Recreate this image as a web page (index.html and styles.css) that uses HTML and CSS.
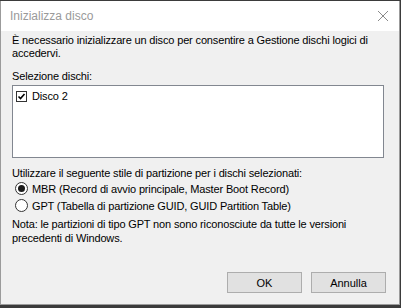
FILE: index.html
```html
<!DOCTYPE html>
<html>
<head>
    <title>Inizializza disco</title>
    <link rel="stylesheet" href="styles.css">
</head>
<body>
    <div class="window">
        <div class="titlebar">
            <span class="title">Inizializza disco</span>
            <svg class="close" width="12" height="12" viewBox="0 0 12 12">
                <path d="M1 1 L11 11 M11 1 L1 11" stroke="#8a8a8a" stroke-width="1" fill="none"/>
            </svg>
        </div>

        <div class="content">
            <p class="intro">È necessario inizializzare un disco per consentire a Gestione dischi logici di accedervi.</p>

            <div class="label">Selezione dischi:</div>
            <div class="listbox">
                <div class="list-item">
                    <svg class="check" width="11" height="11" viewBox="0 0 11 11">
                        <rect x="0.5" y="0.5" width="10" height="10" fill="#fff" stroke="#333"/>
                        <path d="M2.5 5.5 L4.5 7.5 L8.5 3" stroke="#000" stroke-width="1.6" fill="none"/>
                    </svg>
                    <span>Disco 2</span>
                </div>
            </div>

            <div class="label style-label">Utilizzare il seguente stile di partizione per i dischi selezionati:</div>
            <div class="radio-row">
                <svg class="radio" width="13" height="13" viewBox="0 0 13 13">
                    <circle cx="6.5" cy="6.5" r="6" fill="#fff" stroke="#333"/>
                    <circle cx="6.5" cy="6.5" r="3.5" fill="#1a1a1a"/>
                </svg>
                <span>MBR (Record di avvio principale, Master Boot Record)</span>
            </div>
            <div class="radio-row">
                <svg class="radio" width="13" height="13" viewBox="0 0 13 13">
                    <circle cx="6.5" cy="6.5" r="6" fill="#fff" stroke="#333"/>
                </svg>
                <span>GPT (Tabella di partizione GUID, GUID Partition Table)</span>
            </div>

            <p class="note">Nota: le partizioni di tipo GPT non sono riconosciute da tutte le versioni precedenti di Windows.</p>

            <div class="buttons">
                <button class="btn">OK</button>
                <button class="btn">Annulla</button>
            </div>
        </div>
    </div>
</body>
</html>
```

FILE: styles.css
```css
html, body {
    margin: 0;
    padding: 0;
}

body {
    background-color: #3b3b3b;
    font-family: "Liberation Sans", Arial, sans-serif;
    font-size: 11px;
    letter-spacing: -0.15px;
    color: #000;
    height: 308px;
    overflow: hidden;
}

.window {
    width: 398px;
    height: 303px;
    margin-top: 1px;
    background-color: #f0f0f0;
    border: 1px solid #9b9b9b;
    border-top: none;
}

.titlebar {
    height: 30px;
    background-color: #fff;
    display: flex;
    align-items: center;
    justify-content: space-between;
    padding: 0 10px 0 9px;
}

.title {
    color: #9a9a9a;
    font-size: 12px;
    letter-spacing: 0;
}

.close {
    display: block;
}

.content {
    padding: 3px 0 0 11px;
}

.intro {
    margin: 0;
    line-height: 13px;
    width: 365px;
}

.label {
    margin-top: 9px;
    line-height: 14px;
}

.listbox {
    margin-top: 2px;
    width: 370px;
    height: 71px;
    background-color: #fff;
    border: 1px solid #828790;
}

.list-item {
    display: flex;
    align-items: center;
    gap: 5px;
    padding: 4px 0 0 3px;
    line-height: 13px;
}

.check {
    display: block;
}

.style-label {
    margin-top: 8px;
}

.radio-row {
    display: flex;
    align-items: center;
    gap: 4px;
    height: 17px;
    padding-left: 3px;
}

.radio {
    display: block;
}

.note {
    margin: 3px 0 0;
    line-height: 14px;
    width: 380px;
}

.buttons {
    display: flex;
    justify-content: flex-end;
    gap: 9px;
    margin-top: 27px;
    padding-right: 13px;
}

.btn {
    width: 75px;
    height: 21px;
    background-color: #e1e1e1;
    border: 1px solid #adadad;
    font-family: "Liberation Sans", Arial, sans-serif;
    font-size: 11px;
    color: #000;
    padding: 0;
}
```
